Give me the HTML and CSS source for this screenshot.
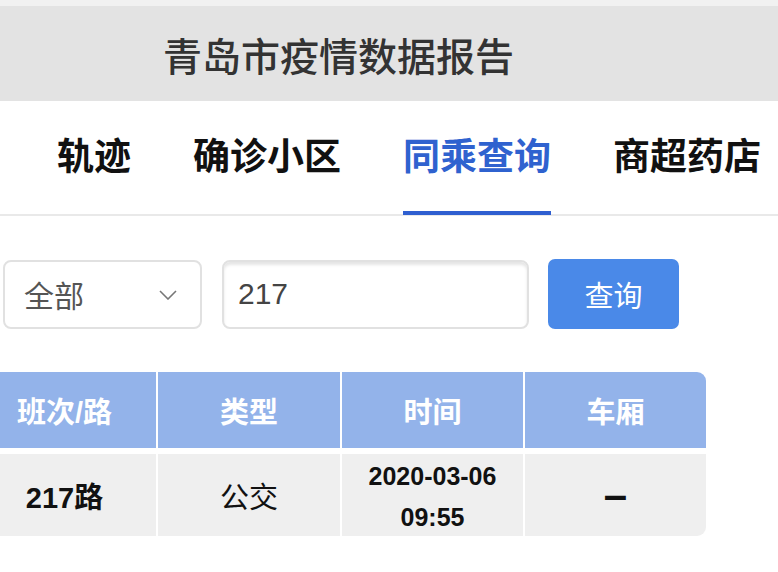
FILE: index.html
```html
<!DOCTYPE html>
<html lang="zh-CN">

<head>
    <meta charset="UTF-8">
    <meta name="viewport" content="width=device-width, initial-scale=1.0">
    <title>青岛市疫情数据报告</title>
    <link rel="stylesheet" href="styles.css">
</head>

<body>
    <div class="top-strip"></div>
    <header class="page-header">
        <h1 class="title">青岛市疫情数据报告</h1>
    </header>

    <nav class="tabs">
        <a class="tab">轨迹</a>
        <a class="tab">确诊小区</a>
        <a class="tab active">同乘查询</a>
        <a class="tab">商超药店</a>
    </nav>

    <div class="search-row">
        <div class="select">
            <span>全部</span>
            <svg class="chevron" width="18" height="10" viewBox="0 0 18 10">
                <polyline points="1,1 9,9 17,1" fill="none" stroke="#777" stroke-width="1.6" />
            </svg>
        </div>
        <input class="search-input" type="text" value="217">
        <button class="search-btn">查询</button>
    </div>

    <div class="result-table">
        <div class="th">班次/路</div>
        <div class="th">类型</div>
        <div class="th">时间</div>
        <div class="th last">车厢</div>

        <div class="td bold">217路</div>
        <div class="td">公交</div>
        <div class="td time">2020-03-06<br>09:55</div>
        <div class="td last dash">–</div>
    </div>
</body>

</html>
```

FILE: styles.css
```css
* {
    padding: 0;
    margin: 0;
    box-sizing: border-box;
}

body {
    background: #fff;
    font-family: "Liberation Sans", "Noto Sans CJK SC", sans-serif;
    overflow: hidden;
}

.top-strip {
    height: 6px;
    background-color: #f1f1f1;
}

.page-header {
    height: 95px;
    background-color: #e3e3e3;
    display: flex;
    align-items: center;
    padding-left: 163px;
}

.title {
    font-size: 39px;
    font-weight: 500;
    color: #333;
}

.tabs {
    display: flex;
    gap: 62px;
    padding-left: 57px;
    border-bottom: 2px solid #e9e9e9;
}

.tab {
    font-size: 37px;
    font-weight: bold;
    color: #111;
    line-height: 52px;
    padding: 31px 0 27px;
    border-bottom: 4px solid transparent;
    margin-bottom: -1px;
}

.tab.active {
    color: #2f62cf;
    border-bottom-color: #2f5fd0;
}

.search-row {
    display: flex;
    align-items: center;
    margin-top: 43px;
    padding-left: 3px;
}

.select {
    width: 199px;
    height: 69px;
    border: 2px solid #e1e1e1;
    border-radius: 8px;
    display: flex;
    align-items: center;
    justify-content: space-between;
    padding: 0 23px 0 19px;
    font-size: 30px;
    color: #555;
}

.chevron {
    margin-top: 2px;
}

.search-input {
    width: 307px;
    height: 69px;
    margin-left: 20px;
    border: 2px solid #e1e1e1;
    border-radius: 8px;
    box-shadow: inset 0 3px 3px rgba(0, 0, 0, 0.1);
    padding: 0 14px;
    font-family: "Liberation Sans", sans-serif;
    font-size: 30px;
    color: #444;
    outline: none;
}

.search-btn {
    width: 131px;
    height: 70px;
    margin-left: 19px;
    border: none;
    border-radius: 7px;
    background-color: #4a89e8;
    color: #fff;
    font-family: "Noto Sans CJK SC", sans-serif;
    font-size: 29px;
}

.result-table {
    display: grid;
    grid-template-columns: 183px 182px 181px 181px;
    grid-template-rows: 76px 82px;
    column-gap: 2px;
    row-gap: 6px;
    margin: 43px 0 0 -27px;
}

.th {
    background-color: #93b3ea;
    color: #fff;
    font-size: 29px;
    font-weight: bold;
    display: flex;
    align-items: center;
    justify-content: center;
}

.th.last {
    border-top-right-radius: 9px;
}

.td {
    background-color: #efefef;
    color: #111;
    font-size: 29px;
    display: flex;
    align-items: center;
    justify-content: center;
    text-align: center;
}

.td.last {
    border-bottom-right-radius: 9px;
}

.bold {
    font-weight: bold;
}

.time {
    font-size: 25px;
    font-weight: bold;
    line-height: 41px;
    padding-top: 4px;
}

.dash {
    font-weight: bold;
    font-size: 42px;
}
```
